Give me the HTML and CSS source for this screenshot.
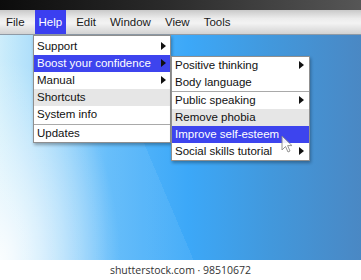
FILE: index.html
```html
<!DOCTYPE html>
<html lang="en">
<head>
    <meta charset="UTF-8">
    <title>Help menu</title>
    <link rel="stylesheet" href="styles.css">
</head>
<body>
    <div class="screen">
        <div class="titlebar"></div>
        <nav class="menubar">
            <span class="menubar-item">File</span>
            <span class="menubar-item active">Help</span>
            <span class="menubar-item">Edit</span>
            <span class="menubar-item">Window</span>
            <span class="menubar-item">View</span>
            <span class="menubar-item">Tools</span>
        </nav>
        <div class="desktop"></div>

        <ul class="menu menu-main">
            <li class="menu-item has-sub">Support</li>
            <li class="menu-item has-sub selected">Boost your confidence</li>
            <li class="menu-item has-sub">Manual</li>
            <li class="menu-item hover">Shortcuts</li>
            <li class="menu-item">System info</li>
            <li class="separator"></li>
            <li class="menu-item">Updates</li>
        </ul>

        <ul class="menu menu-sub">
            <li class="menu-item has-sub">Positive thinking</li>
            <li class="menu-item">Body language</li>
            <li class="separator"></li>
            <li class="menu-item has-sub">Public speaking</li>
            <li class="menu-item hover">Remove phobia</li>
            <li class="menu-item selected">Improve self-esteem</li>
            <li class="menu-item has-sub">Social skills tutorial</li>
        </ul>

        <svg class="cursor" width="12" height="18" viewBox="0 0 12 18">
            <path d="M1 1 L1 15 L4.5 11.5 L7 17 L9 16 L6.6 10.6 L11 10.6 Z" fill="#fff" stroke="#8a8a8a" stroke-width="1"/>
        </svg>
    </div>
    <footer class="credit">shutterstock.com · 98510672</footer>
</body>
</html>
```

FILE: styles.css
```css
body {
    margin: 0;
    width: 361px;
    height: 280px;
    overflow: hidden;
    background: #fff;
    font-family: 'Liberation Sans', Arial, sans-serif;
}

.screen {
    position: relative;
    height: 260px;
    display: flex;
    flex-direction: column;
}

.titlebar {
    height: 10px;
    background: linear-gradient(90deg, #0c0c0c, #2a2a2a 45%, #565656);
}

.menubar {
    height: 24px;
    display: flex;
    align-items: stretch;
    gap: 6px;
    padding-left: 2px;
    background: linear-gradient(#c9c9c9, #ececec 35%, #f3f3f3 55%, #d2d2d2);
    border-bottom: 1px solid #8e9aa6;
}

.menubar-item {
    display: flex;
    align-items: center;
    padding: 0 4px;
    font-size: 11.5px;
    color: #1a1a1a;
}

.menubar-item.active {
    background: #3b3ff0;
    color: #fff;
}

.desktop {
    flex: 1;
    background:
        linear-gradient(67deg, rgba(255, 255, 255, 0.07) 42.4%, rgba(255, 255, 255, 0) 42.4%),
        radial-gradient(ellipse 120px 200px at 0% 100%, rgba(255, 255, 255, 0.9), rgba(255, 255, 255, 0)),
        linear-gradient(90deg, #c9ecfb, #92d2fa 15%, #5cb9fa 30%, #3ca8f8 52%, #4298dc 75%, #4a88c4);
}

.menu {
    position: absolute;
    margin: 0;
    padding: 0;
    list-style: none;
    background: #fff;
    border: 1px solid #8f8f8f;
    box-shadow: 1px 2px 3px rgba(0, 0, 0, 0.3);
}

.menu-main {
    left: 33px;
    top: 35px;
    width: 136px;
    padding-top: 2px;
}

.menu-sub {
    left: 171px;
    top: 56px;
    width: 137px;
}

.menu-item {
    position: relative;
    height: 17px;
    line-height: 17px;
    padding-left: 3px;
    font-size: 11.5px;
    color: #111;
    white-space: nowrap;
}

.menu-item.hover {
    background: #e6e6e6;
}

.menu-item.selected {
    background: #3d44ee;
    color: #fff;
}

.menu-item.has-sub::after {
    content: '';
    position: absolute;
    right: 4px;
    top: 4px;
    border-left: 5px solid #111;
    border-top: 4.5px solid transparent;
    border-bottom: 4.5px solid transparent;
}

.menu-sub .menu-item.has-sub::after {
    right: 5px;
}

.separator {
    height: 1px;
    background: #a9a9a9;
}

.menu-main .separator {
    margin-top: 1px;
}

.cursor {
    position: absolute;
    left: 281px;
    top: 135px;
    opacity: 0.9;
}

.credit {
    height: 20px;
    line-height: 20px;
    text-align: center;
    font-family: 'Open Sans', sans-serif;
    font-size: 10.5px;
    color: #333;
}
```
